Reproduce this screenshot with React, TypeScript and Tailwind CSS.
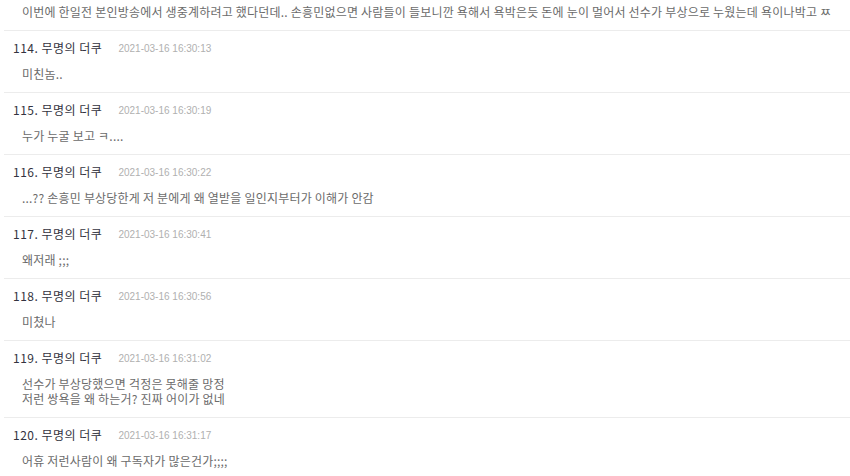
const comments = [
  { no: 114, date: "2021-03-16 16:30:13", body: ["미친놈.."] },
  { no: 115, date: "2021-03-16 16:30:19", body: ["누가 누굴 보고 ㅋ...."] },
  { no: 116, date: "2021-03-16 16:30:22", body: ["...?? 손흥민 부상당한게 저 분에게 왜 열받을 일인지부터가 이해가 안감"] },
  { no: 117, date: "2021-03-16 16:30:41", body: ["왜저래 ;;;"] },
  { no: 118, date: "2021-03-16 16:30:56", body: ["미쳤나"] },
  {
    no: 119,
    date: "2021-03-16 16:31:02",
    body: ["선수가 부상당했으면 걱정은 못해줄 망정", "저런 쌍욕을 왜 하는거? 진짜 어이가 없네"],
  },
  { no: 120, date: "2021-03-16 16:31:17", body: ["어휴 저런사람이 왜 구독자가 많은건가;;;;"] },
];

const font = "font-['Noto_Sans_CJK_KR','Noto_Sans',sans-serif]";

export default function App() {
  return (
    <div className={`w-[850px] h-[476px] overflow-hidden bg-white pl-[4px] ${font}`}>
      {/* tail of the previous comment */}
      <div className="pt-[4px] pb-[11px] pl-[18px] text-[12px] leading-[15px] tracking-[0.2px] text-[#6b6b6b] whitespace-nowrap">
        이번에 한일전 본인방송에서 생중계하려고 했다던데.. 손흥민없으면 사람들이 들보니깐 욕해서 욕박은듯 돈에 눈이 멀어서 선수가 부상으로 누웠는데 욕이나박고 ㅉ
      </div>
      {comments.map((c) => (
        <div key={c.no} className="border-t border-[#ececec] pt-[7px] pb-[11px]">
          <div className="flex items-center h-[20px] pl-[9px]">
            <span className="text-[12px] text-[#333340] tracking-[0.5px]">{c.no}. 무명의 더쿠</span>
            <span className="ml-[16px] text-[10px] text-[#b0b0b0] font-['Liberation_Sans',sans-serif]">{c.date}</span>
          </div>
          <div className="mt-[8px] pl-[18px] text-[12px] leading-[15px] tracking-[0.2px] text-[#6b6b6b]">
            {c.body.map((line, i) => (
              <div key={i}>{line}</div>
            ))}
          </div>
        </div>
      ))}
    </div>
  );
}
